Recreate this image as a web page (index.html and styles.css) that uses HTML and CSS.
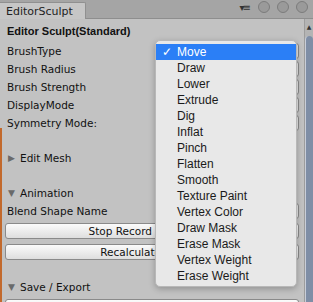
FILE: index.html
```html
<!DOCTYPE html>
<html lang="en">

<head>
    <meta charset="UTF-8">
    <title>EditorSculpt</title>
    <link rel="stylesheet" href="styles.css">
</head>

<body>
    <div class="window">
        <div class="tabbar">
            <div class="tab">EditorSculpt</div>
            <div class="tab-tools">
                <span class="tab-menu">&#9662;&#8801;</span>
                <span class="dot"></span>
                <span class="dot"></span>
                <span class="dot"></span>
            </div>
        </div>

        <div class="main">
            <div class="inspector">
                <div class="title">Editor Sculpt(Standard)</div>
                <div class="row"><span class="label">BrushType</span><span class="field"></span></div>
                <div class="row"><span class="label">Brush Radius</span><span class="field"></span></div>
                <div class="row"><span class="label">Brush Strength</span><span class="field"></span></div>
                <div class="row"><span class="label">DisplayMode</span><span class="field"></span></div>
                <div class="row"><span class="label">Symmetry Mode:</span><span class="field"></span></div>

                <div class="foldout closed"><span class="arrow">&#9654;</span>Edit Mesh</div>

                <div class="foldout open"><span class="arrow">&#9660;</span>Animation</div>
                <div class="row"><span class="label">Blend Shape Name</span><span class="field"></span></div>
                <div class="button stop">Stop Record</div>
                <div class="button recalc">Recalculate</div>

                <div class="foldout open save"><span class="arrow">&#9660;</span>Save / Export</div>
                <div class="button"></div>
            </div>
            <div class="scrollbar">
                <span class="scroll-up">&#9650;</span>
                <div class="thumb"></div>
            </div>
        </div>

        <!-- popup of the BrushType field -->
        <div class="popup">
            <div class="item selected"><span class="check">&#10003;</span>Move</div>
            <div class="item">Draw</div>
            <div class="item">Lower</div>
            <div class="item">Extrude</div>
            <div class="item">Dig</div>
            <div class="item">Inflat</div>
            <div class="item">Pinch</div>
            <div class="item">Flatten</div>
            <div class="item">Smooth</div>
            <div class="item">Texture Paint</div>
            <div class="item">Vertex Color</div>
            <div class="item">Draw Mask</div>
            <div class="item">Erase Mask</div>
            <div class="item">Vertex Weight</div>
            <div class="item">Erase Weight</div>
        </div>
    </div>
</body>

</html>
```

FILE: styles.css
```css
body {
    margin: 0;
    font-family: "DejaVu Sans", sans-serif;
    font-size: 10.5px;
    color: #111;
}

.window {
    position: relative;
    width: 313px;
    height: 302px;
    overflow: hidden;
    background: #c2c2c2;
}

.tabbar {
    display: flex;
    align-items: flex-end;
    justify-content: space-between;
    height: 19px;
    background: #a5a5a5;
    border-bottom: 1px solid #8e8e8e;
    box-sizing: border-box;
}

.tab {
    width: 86px;
    height: 17px;
    line-height: 17px;
    padding-left: 6px;
    box-sizing: border-box;
    background: #c6c6c6;
    border: 1px solid #909090;
    border-left: none;
    border-bottom: none;
    border-radius: 0 2px 0 0;
    font-size: 11px;
    color: #222;
    margin-bottom: -1px;
}

.tab-tools {
    display: flex;
    align-items: center;
    gap: 7px;
    align-self: flex-start;
    margin-top: 1px;
    padding-right: 5px;
}

.tab-menu {
    font-size: 10px;
    color: #333;
    letter-spacing: -2px;
    margin-right: 2px;
}

.dot {
    width: 12px;
    height: 12px;
    border-radius: 50%;
    background: #9a9a9a;
    border: 1px solid #7c7c7c;
    box-sizing: border-box;
}

.main {
    display: flex;
    height: 283px;
}

.inspector {
    flex: 1;
    padding: 3px 5px 0 7px;
    /* orange strip on the left edge, lower part only */
    background: linear-gradient(#c2c2c2 109px, #c2692c 109px) no-repeat left top / 2px 100%;
}

.title {
    height: 18px;
    line-height: 18px;
    font-family: "Liberation Sans", sans-serif;
    font-weight: bold;
    font-size: 11px;
    margin-bottom: 2px;
}

.row {
    display: flex;
    align-items: center;
    height: 18px;
}

.label {
    width: 152px;
}

.field {
    flex: 1;
    height: 14px;
    border: 1px solid #8a8a8a;
    border-radius: 3px;
    background: #e4e4e4;
}

.foldout {
    display: flex;
    align-items: center;
    height: 18px;
    margin-left: 1px;
}

.foldout.closed {
    margin-top: 17px;
}

.foldout.open {
    margin-top: 17px;
}

.foldout.save {
    margin-top: 18px;
}

.arrow {
    width: 12px;
    font-size: 9px;
    color: #6a6a6a;
}

.button {
    height: 16px;
    line-height: 15px;
    margin: 3px 0 4px -2px;
    box-sizing: border-box;
    border: 1px solid #8a8a8a;
    border-radius: 3px;
    background: linear-gradient(#fbfbfb, #dedede);
    text-align: right;
}

.button.stop {
    padding-right: 146px;
}

.button.recalc {
    margin-top: 5px;
    padding-right: 137px;
}

.scrollbar {
    position: relative;
    width: 8px;
    border-left: 1px solid #9d9d9d;
    background: #b4b4b4;
}

.scroll-up {
    display: block;
    font-size: 6px;
    text-align: center;
    color: #333;
    margin-top: 4px;
}

.thumb {
    margin-top: 6px;
    height: 270px;
    background: #7f8ea6;
    border-left: 1px solid #c9ced8;
    border-radius: 4px 4px 0 0;
}

.popup {
    position: absolute;
    left: 155px;
    top: 40px;
    width: 142px;
    height: 247px;
    padding-top: 3px;
    box-sizing: border-box;
    background: #e8e8e8;
    border: 1px solid #b8b8b8;
    border-radius: 5px;
    box-shadow: 0 2px 6px rgba(0, 0, 0, 0.25);
    font-family: "Liberation Sans", sans-serif;
    font-size: 12px;
    color: #1a1a1a;
}

.item {
    height: 16px;
    line-height: 16px;
    padding-left: 21px;
    position: relative;
}

.item.selected {
    background: #2b7ff6;
    color: #fff;
}

.check {
    position: absolute;
    left: 6px;
}
```
